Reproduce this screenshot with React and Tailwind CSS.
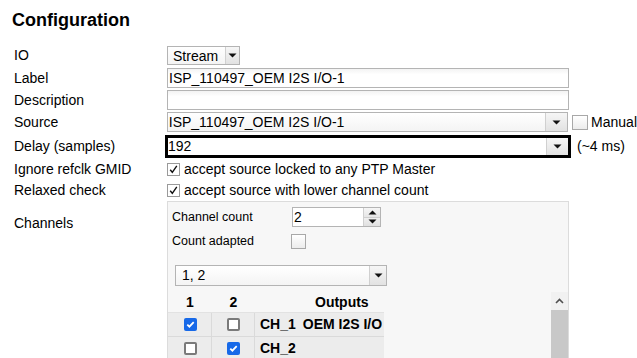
import React from "react";

const font = { fontFamily: '"Liberation Sans", Arial, sans-serif' };

function Arrow() {
  return (
    <svg width="9" height="5" viewBox="0 0 9 5" className="block">
      <path d="M0.5 0.5 L8.5 0.5 L4.5 4.5 Z" fill="#111" />
    </svg>
  );
}

function SelectBox({ text, className, arrowW = "w-[22px]" }) {
  return (
    <div className={"flex items-stretch border border-[#b4b4b4] bg-gradient-to-b from-white to-[#f4f4f4] " + className}>
      <div className="flex-1 pl-[1px] leading-[18px] overflow-hidden whitespace-nowrap">{text}</div>
      <div className={"shrink-0 flex items-center justify-center border-l border-[#d0d0d0] bg-gradient-to-b from-[#f6f6f6] to-[#e2e2e2] " + arrowW}>
        <Arrow />
      </div>
    </div>
  );
}

function TickBox() {
  return (
    <div className="shrink-0 w-[13px] h-[13px] border border-[#9a9a9a] bg-white flex items-center justify-center">
      <svg width="11" height="11" viewBox="0 0 11 11">
        <path d="M2.2 5.8 L4.3 8.3 L8.8 1.8" stroke="#111" strokeWidth="1.4" fill="none" />
      </svg>
    </div>
  );
}

function BlueCheck() {
  return (
    <div className="shrink-0 w-[13px] h-[13px] rounded-[2px] bg-[#1769e8] flex items-center justify-center">
      <svg width="11" height="11" viewBox="0 0 11 11">
        <path d="M2.3 5.6 L4.4 7.7 L8.7 3.2" stroke="#fff" strokeWidth="1.8" fill="none" />
      </svg>
    </div>
  );
}

function EmptyCheck() {
  return <div className="shrink-0 w-[13px] h-[13px] rounded-[2px] border-2 border-[#7a7a7a] bg-white" />;
}

export default function App() {
  return (
    <div style={font} className="w-[637px] h-[358px] overflow-hidden bg-white text-[14px] text-black">
      <div className="pl-[12px] pt-[10px] text-[18px] leading-[21px] font-bold">Configuration</div>

      <div className="mt-[14px] flex flex-col">
        {/* IO */}
        <div className="flex items-center h-[21px]">
          <div className="w-[167px] pl-[14px]">IO</div>
          <SelectBox text={<span className="pl-[4px]">Stream</span>} className="w-[73px] h-[19px]" arrowW="w-[14px]" />
        </div>
        {/* Label */}
        <div className="flex items-center h-[22px] mt-[1px]">
          <div className="w-[167px] pl-[14px]">Label</div>
          <div className="w-[402px] h-[20px] border border-[#b4b4b4] bg-gradient-to-b from-[#f3f3f3] to-white to-[30%] pl-[1px] leading-[18px]">ISP_110497_OEM I2S I/O-1</div>
        </div>
        {/* Description */}
        <div className="flex items-center h-[22px]">
          <div className="w-[167px] pl-[14px]">Description</div>
          <div className="w-[402px] h-[20px] border border-[#b4b4b4] bg-gradient-to-b from-[#f3f3f3] to-white to-[30%]" />
        </div>
        {/* Source */}
        <div className="flex items-center h-[22px]">
          <div className="w-[167px] pl-[14px]">Source</div>
          <SelectBox text="ISP_110497_OEM I2S I/O-1" className="w-[402px] h-[20px]" />
          <div className="ml-[4px] w-[16px] h-[15px] border border-[#a8a8a8] bg-gradient-to-b from-white to-[#ececec]" />
          <div className="ml-[3px]">Manual</div>
        </div>
        {/* Delay */}
        <div className="flex items-center h-[25px] mt-[1px]">
          <div className="w-[165px] pl-[14px]">Delay (samples)</div>
          <div className="w-[406px] h-[23px] border-[3px] border-black flex items-stretch bg-white">
            <div className="flex-1 leading-[17px]">192</div>
            <div className="w-[22px] flex items-center justify-center border-l border-[#d0d0d0] bg-gradient-to-b from-[#f6f6f6] to-[#e2e2e2]">
              <Arrow />
            </div>
          </div>
          <div className="ml-[6px]">(~4 ms)</div>
        </div>
        {/* Ignore */}
        <div className="flex items-center h-[21px]">
          <div className="w-[167px] pl-[14px]">Ignore refclk GMID</div>
          <TickBox />
          <div className="ml-[4px]">accept source locked to any PTP Master</div>
        </div>
        {/* Relaxed */}
        <div className="flex items-center h-[21px]">
          <div className="w-[167px] pl-[14px]">Relaxed check</div>
          <TickBox />
          <div className="ml-[4px]">accept source with lower channel count</div>
        </div>
        {/* Channels */}
        <div className="flex items-start">
          <div className="w-[167px] pl-[14px] pt-[12px]">Channels</div>
          <div className="w-[402px] h-[200px] border border-[#dcdcdc] bg-[#f7f7f7] pt-[5px]">
            <div className="flex items-center h-[20px]">
              <div className="w-[124px] pl-[4px] text-[12.5px]">Channel count</div>
              <div className="w-[89px] h-[20px] border border-[#b4b4b4] bg-white flex">
                <div className="flex-1 leading-[18px] pl-[1px]">2</div>
                <div className="w-[17px] flex flex-col border-l border-[#d0d0d0]">
                  <div className="flex-1 flex items-center justify-center bg-gradient-to-b from-[#f6f6f6] to-[#e6e6e6] border-b border-[#cfcfcf]">
                    <svg width="9" height="5" viewBox="0 0 9 5"><path d="M0.5 4.5 L8.5 4.5 L4.5 0.5 Z" fill="#111" /></svg>
                  </div>
                  <div className="flex-1 flex items-center justify-center bg-gradient-to-b from-[#f0f0f0] to-[#e0e0e0]">
                    <Arrow />
                  </div>
                </div>
              </div>
            </div>
            <div className="flex items-center h-[20px] mt-[4px]">
              <div className="w-[123px] pl-[4px] text-[12.5px]">Count adapted</div>
              <div className="w-[15px] h-[15px] border border-[#a8a8a8] bg-gradient-to-b from-white to-[#ececec]" />
            </div>
            <div className="mt-[14px] ml-[7px]">
              <SelectBox text={<span className="pl-[5px]">1, 2</span>} className="w-[212px] h-[21px]" arrowW="w-[17px]" />
            </div>
            <div className="mt-[6px] flex h-[80px]">
              <div className="w-[216px] shrink-0 overflow-hidden">
                <div className="flex h-[20px] items-center font-bold">
                  <div className="w-[44px] shrink-0 text-center">1</div>
                  <div className="w-[43px] shrink-0 text-center">2</div>
                  <div className="pl-[60px] whitespace-nowrap">Outputs</div>
                </div>
                <div className="flex h-[24px] bg-[#ececec] border-t border-[#e2e2e2]">
                  <div className="w-[44px] shrink-0 border-r border-[#dadada] flex items-center justify-center pl-[1px]"><BlueCheck /></div>
                  <div className="w-[43px] shrink-0 border-r border-[#dadada] flex items-center justify-center"><EmptyCheck /></div>
                  <div className="flex-1 flex items-center pl-[5px] font-bold whitespace-nowrap">
                    <span>CH_1</span><span className="ml-[7px]">OEM I2S I/O</span>
                  </div>
                </div>
                <div className="flex h-[24px] bg-[#ececec] border-t border-[#dadada]">
                  <div className="w-[44px] shrink-0 border-r border-[#dadada] flex items-center justify-center pl-[1px]"><EmptyCheck /></div>
                  <div className="w-[43px] shrink-0 border-r border-[#dadada] flex items-center justify-center"><BlueCheck /></div>
                  <div className="flex-1 flex items-center pl-[5px] font-bold whitespace-nowrap">
                    <span>CH_2</span>
                  </div>
                </div>
              </div>
              <div className="flex-1" />
              <div className="w-[17px] shrink-0 flex flex-col">
                <div className="h-[18px] bg-[#f1f1f1] flex items-center justify-center">
                  <svg width="9" height="6" viewBox="0 0 9 6"><path d="M1 5 L4.5 1.5 L8 5" stroke="#505050" strokeWidth="1.6" fill="none" /></svg>
                </div>
                <div className="flex-1 bg-[#c8c8c8]" />
              </div>
            </div>
          </div>
        </div>
      </div>
    </div>
  );
}
